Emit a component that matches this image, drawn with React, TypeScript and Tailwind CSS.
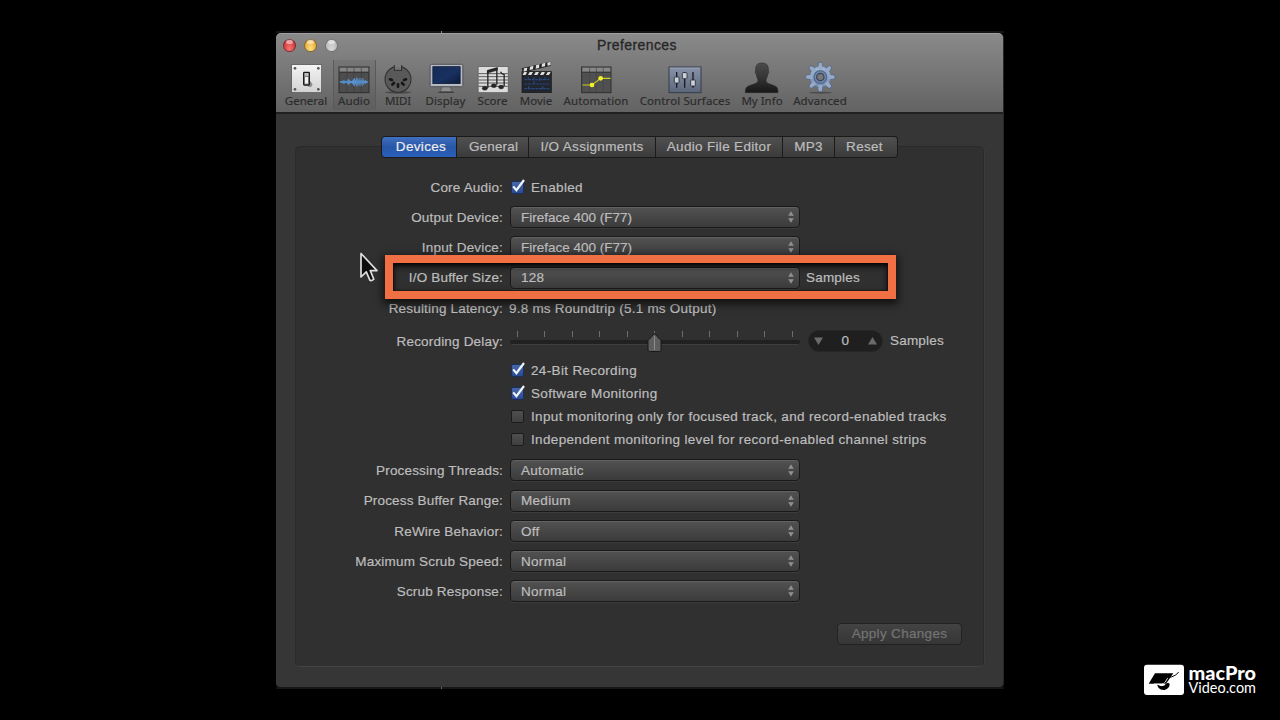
import type { ReactNode } from "react";

function GeneralIcon() {
  return (
    <svg width="36" height="35" viewBox="54 102 108 105">
      <defs>
        <linearGradient id="plate" x1="0" y1="0" x2="0" y2="1">
          <stop offset="0" stopColor="#f4f4f4" />
          <stop offset="1" stopColor="#d2d2d2" />
        </linearGradient>
      </defs>
      <rect x="65" y="116" width="90" height="84" fill="url(#plate)" stroke="#4c4c4c" strokeWidth="2" />
      <g fill="#555">
        <circle cx="75" cy="127" r="4" />
        <circle cx="145" cy="127" r="4" />
        <circle cx="75" cy="190" r="4" />
        <circle cx="145" cy="190" r="4" />
      </g>
      <path d="M104 178 l18 6 l6 -8 l-6 -10z" fill="#8e8e8e" />
      <rect x="101" y="139" width="17" height="38" rx="2" fill="#bdbdbd" stroke="#1c1c1c" strokeWidth="4" />
      <rect x="104" y="152" width="11" height="22" fill="#f2f2f2" stroke="#555" strokeWidth="2" />
    </svg>
  );
}

const waveBars = [3, 5, 8, 12, 6, 4, 11, 20, 13, 7, 5, 10, 18, 25, 14, 27, 22, 14, 24, 12, 24, 16, 8, 11, 5, 3];

function AudioIcon() {
  return (
    <svg width="36" height="35" viewBox="198 102 108 105">
      <rect x="207" y="123" width="90" height="77" fill="#4d4d4d" stroke="#2e2e2e" strokeWidth="3" />
      <rect x="209" y="125" width="86" height="12" fill="#858585" />
      <path d="M209 139h86" stroke="#333" strokeWidth="3" />
      <path d="M231 125v74M252 125v74M274 125v74" stroke="#3d3d3d" strokeWidth="2" />
      <path d="M209 168h86" stroke="#4d90db" strokeWidth="3" />
      {waveBars.map((h, i) => (
        <rect key={i} x={211 + i * 3.2} y={168 - h / 2} width="2.7" height={h} fill="#5b9be2" />
      ))}
    </svg>
  );
}

function MidiIcon() {
  return (
    <svg width="36" height="35" viewBox="330 102 108 105">
      <ellipse cx="384" cy="199" rx="40" ry="4" fill="#4a4a4a" />
      <circle cx="384" cy="160" r="38" fill="#595959" stroke="#2e2e2e" strokeWidth="5" />
      <circle cx="384" cy="160" r="36.5" fill="none" stroke="#7d7d7d" strokeWidth="1.5" />
      <rect x="373" y="119" width="22" height="14" fill="#737373" stroke="#2e2e2e" strokeWidth="3" />
      <rect x="375" y="115" width="18" height="8" fill="#7b7b7b" />
      <g stroke="#161616" strokeWidth="8" strokeLinecap="round">
        <path d="M360 160l6 2M367 176l5 -5M384 182v-7M401 176l-5 -5M408 160l-6 2" />
      </g>
    </svg>
  );
}

function DisplayIcon() {
  return (
    <svg width="36" height="35" viewBox="472.5 102 108 105">
      <defs>
        <linearGradient id="screen" x1="0" y1="0" x2="1" y2="1">
          <stop offset="0" stopColor="#142a55" />
          <stop offset=".55" stopColor="#193161" />
          <stop offset="1" stopColor="#0a1a3c" />
        </linearGradient>
      </defs>
      <path d="M515 182h24l6 15h-36z" fill="#8d8d8d" stroke="#4c4c4c" strokeWidth="2" />
      <path d="M504 199h46" stroke="#3f3f3f" strokeWidth="4" />
      <rect x="479" y="115" width="98" height="67" rx="3" fill="#b4b9c2" stroke="#43464c" strokeWidth="2.5" />
      <rect x="487" y="122" width="82" height="51" fill="url(#screen)" stroke="#0a1328" strokeWidth="2" />
    </svg>
  );
}

function ScoreIcon() {
  return (
    <svg width="36" height="35" viewBox="613.5 102 108 105">
      <rect x="623" y="122" width="90" height="78" fill="#dcdcdc" stroke="#575757" strokeWidth="2" />
      <path d="M624 143h88M624 152h88M624 162h88M624 171h88M624 181h88" stroke="#404040" strokeWidth="2.5" />
      <g fill="#252525" stroke="#252525">
        <path d="M652 186v-50l27 -8v48M679 133l0 -5" strokeWidth="4" fill="none" />
        <path d="M650 133l31 -9v9l-31 9z" />
        <ellipse cx="643" cy="187" rx="8" ry="6" />
        <ellipse cx="670" cy="179" rx="8" ry="6" />
        <path d="M701 180v-34q-8 -2 -11 -9" strokeWidth="4" fill="none" />
        <ellipse cx="692" cy="183" rx="8" ry="6" />
      </g>
    </svg>
  );
}

function MovieIcon() {
  return (
    <svg width="36" height="35" viewBox="24 102 108 105">
      <rect x="36" y="137" width="88" height="63" fill="#20252e" stroke="#191919" strokeWidth="2" />
      <path d="M35 127l84 -20 4 12 -84 21z" fill="#262626" />
      <path d="M42 127l10 -2 -2 10 -9 2zM60 122l10 -3 -1 11 -10 2zM78 118l10 -3 -1 11 -10 2zM96 113l10 -3 -1 11 -10 2zM112 110l8 -2 2 9 -9 2z" fill="#dedede" />
      <rect x="36" y="137" width="88" height="11" fill="#262626" />
      <path d="M42 138h9l-4 9h-9zM59 138h10l-5 9h-10zM77 138h10l-5 9h-10zM95 138h10l-5 9h-10zM113 138h9l-5 9h-9z" fill="#dedede" />
      <path d="M43 161h76M43 174h76M43 188h76M55 154v8M72 153v22M89 155v9M105 154v10M56 180v11M98 180v11" stroke="#294779" strokeWidth="3.5" strokeDasharray="9 2" />
    </svg>
  );
}

function AutomationIcon() {
  return (
    <svg width="36" height="35" viewBox="204 102 108 105">
      <rect x="215" y="123" width="88" height="77" fill="#505050" stroke="#2e2e2e" strokeWidth="3" />
      <rect x="217" y="125" width="84" height="12" fill="#878787" />
      <path d="M217 139h84" stroke="#373737" strokeWidth="3" />
      <path d="M239 125v74M259 125v74M280 125v74" stroke="#424242" strokeWidth="2" />
      <path d="M217 177h29l26 -20h30" fill="none" stroke="#c9cc21" strokeWidth="3.5" />
      <circle cx="246" cy="177" r="7" fill="#f2f128" />
      <circle cx="272" cy="157" r="7" fill="#f2f128" />
    </svg>
  );
}

function ControlSurfacesIcon() {
  return (
    <svg width="36" height="35" viewBox="471 102 108 105">
      <defs>
        <linearGradient id="mixer" x1="0" y1="0" x2="0" y2="1">
          <stop offset="0" stopColor="#8894ab" />
          <stop offset="1" stopColor="#5c667b" />
        </linearGradient>
      </defs>
      <rect x="477" y="123" width="96" height="77" fill="url(#mixer)" stroke="#343b49" strokeWidth="3" />
      <path d="M479 126h92" stroke="#a3adbd" strokeWidth="2" />
      <path d="M500 138v47M524 138v47M549 138v47" stroke="#181b22" strokeWidth="4" />
      <g fill="#ccd0d7" stroke="#282c36" strokeWidth="2.5">
        <rect x="493" y="153" width="14" height="18" rx="2" />
        <rect x="517" y="140" width="14" height="18" rx="2" />
        <rect x="542" y="162" width="14" height="18" rx="2" />
      </g>
    </svg>
  );
}

function MyInfoIcon() {
  return (
    <svg width="36" height="35" viewBox="42 102 108 105">
      <defs>
        <linearGradient id="person" x1="0" y1="0" x2="0" y2="1">
          <stop offset="0" stopColor="#4c4c4c" />
          <stop offset=".6" stopColor="#2f2f2f" />
          <stop offset="1" stopColor="#171717" />
        </linearGradient>
      </defs>
      <path
        d="M46 200c0 -13 2 -18 12 -21 12 -4 26 -7 26 -16 0 -5 -4 -8 -5 -17 -4 -5 -4 -10 -2 -13 -1 -14 4 -22 19 -22s20 8 19 22c2 3 2 8 -2 13 -1 9 -5 12 -5 17 0 9 13 12 25 16 9 3 11 8 11 21z"
        fill="url(#person)"
        stroke="#262626"
        strokeWidth="1.5"
      />
    </svg>
  );
}

function AdvancedIcon() {
  return (
    <svg width="36" height="35" viewBox="216 102 108 105">
      <defs>
        <linearGradient id="gear" x1="0" y1="0" x2="0" y2="1">
          <stop offset="0" stopColor="#a9bbd4" />
          <stop offset="1" stopColor="#7087ab" />
        </linearGradient>
      </defs>
      <ellipse cx="271" cy="200" rx="34" ry="3" fill="#4b4b4b" />
      <g fill="#8ea4c4" stroke="#4d5f7d" strokeWidth="2">
        {[0, 45, 90, 135, 180, 225, 270, 315].map((a) => (
          <path key={a} d="M262 128l4 -19h10l4 19z" transform={`rotate(${a} 271 153)`} />
        ))}
      </g>
      <circle cx="271" cy="153" r="32" fill="url(#gear)" stroke="#56698a" strokeWidth="1.5" />
      <g fill="#95aac8">
        {[0, 45, 90, 135, 180, 225, 270, 315].map((a) => (
          <path key={a} d="M264 129l4 -17h7l3 17z" transform={`rotate(${a} 271 153)`} />
        ))}
      </g>
      <circle cx="271" cy="153" r="19" fill="#7088ad" stroke="#536a90" strokeWidth="4" />
      <circle cx="271" cy="153" r="11" fill="#77787c" stroke="#3b4557" strokeWidth="4" />
    </svg>
  );
}

const tools: { label: string; icon: ReactNode; cell: string }[] = [
  { label: "General", icon: <GeneralIcon />, cell: "w-[54px] tracking-[0px]" },
  { label: "Audio", icon: <AudioIcon />, cell: "w-[42px] shadow-[inset_1px_0_0_#5a5a5a,1px_0_0_#5a5a5a] bg-black/5 tracking-[0.15px]" },
  { label: "MIDI", icon: <MidiIcon />, cell: "w-[46px] tracking-[-0.2px]" },
  { label: "Display", icon: <DisplayIcon />, cell: "w-[49px] tracking-[0.1px]" },
  { label: "Score", icon: <ScoreIcon />, cell: "w-[45px] tracking-[0px]" },
  { label: "Movie", icon: <MovieIcon />, cell: "w-[42px] tracking-[0px]" },
  { label: "Automation", icon: <AutomationIcon />, cell: "w-[78px] tracking-[0.1px]" },
  { label: "Control Surfaces", icon: <ControlSurfacesIcon />, cell: "w-[100px] tracking-[0.1px]" },
  { label: "My Info", icon: <MyInfoIcon />, cell: "w-[54px] tracking-[0px]" },
  { label: "Advanced", icon: <AdvancedIcon />, cell: "w-[62px] tracking-[0.1px]" },
];

function Light({ color }: { color: string }) {
  return (
    <span className={`relative block h-[13px] w-[13px] rounded-full border border-black/40 ${color}`}>
      <span className="absolute left-[2px] top-0 h-1 w-[7px] rounded-full bg-white/50 blur-[0.5px]" />
    </span>
  );
}

function Header() {
  return (
    <header className="flex h-[81px] flex-col rounded-t-[5px] border-b-2 border-[#202020] border-t border-t-[#a0a0a0] bg-gradient-to-b from-[#8a8a8a] to-[#636363]">
      <div className="grid h-[26px] grid-cols-[1fr_auto_1fr] items-start">
        <div className="flex gap-2 pl-[7px] pt-[5px]">
          <Light color="bg-radial-[at_50%_80%] from-[#f5766f] to-[#c92733]" />
          <Light color="bg-radial-[at_50%_80%] from-[#ffe07d] to-[#dd9a2b]" />
          <Light color="bg-radial-[at_50%_80%] from-[#d8d8d8] to-[#b3b3b3]" />
        </div>
        <h1 className="pr-[5px] pt-[3px] text-[14px] leading-4 tracking-[0.4px] text-[#262626] [-webkit-text-stroke:0.3px_#262626]">
          Preferences
        </h1>
      </div>
      <nav className="flex pl-[3px] font-['Noto_Sans',sans-serif] text-[11.5px] text-[#2c2c2c] [-webkit-text-stroke:0.2px_#2c2c2c]">
        {tools.map((t) => (
          <div key={t.label} className={`flex h-[50px] flex-col items-center ${t.cell}`}>
            <span className="block h-[35px] w-9 shrink-0">{t.icon}</span>
            <span className="-mt-[2px] whitespace-nowrap leading-4">{t.label}</span>
          </div>
        ))}
      </nav>
    </header>
  );
}

const tabs = [
  { label: "Devices", cell: "w-[76px] pl-[4px] rounded-l-[4px] bg-gradient-to-b from-[#4170c1] via-[#2756a7] to-[#2a5fbb] text-[#ededed]" },
  { label: "General", cell: "w-[72px] pl-[2px] tracking-[0.15px] bg-gradient-to-b from-[#505050] to-[#3b3b3b]" },
  { label: "I/O Assignments", cell: "w-[127px] bg-gradient-to-b from-[#505050] to-[#3b3b3b]" },
  { label: "Audio File Editor", cell: "w-[127px] bg-gradient-to-b from-[#505050] to-[#3b3b3b]" },
  { label: "MP3", cell: "w-[52px] bg-gradient-to-b from-[#505050] to-[#3b3b3b]" },
  { label: "Reset", cell: "w-[63px] pr-[3px] rounded-r-[4px] bg-gradient-to-b from-[#505050] to-[#3b3b3b]" },
];

function Tabs() {
  return (
    <div className="mx-auto flex h-[22px] w-[517px]">
      {tabs.map((t) => (
        <div
          key={t.label}
          className={`flex items-center justify-center whitespace-nowrap border-y border-r border-[#1a1a1a] first:border-l ${t.cell}`}
        >
          {t.label}
        </div>
      ))}
    </div>
  );
}

function Row({ label, height = "h-[30px]", children }: { label?: string; height?: string; children: ReactNode }) {
  return (
    <div className={`grid grid-cols-[207px_1fr] items-center gap-[7px] whitespace-nowrap ${height}`}>
      <div className="pt-px text-right tracking-[0.18px]">{label}</div>
      <div className="flex items-center">{children}</div>
    </div>
  );
}

function Select({ value, tight }: { value: string; tight?: boolean }) {
  return (
    <div className="flex h-[22px] w-[290px] items-center justify-between rounded-[4px] border border-[#191919] bg-gradient-to-b from-[#525252] to-[#3b3b3b] pl-[10px] pr-[5px] shadow-[inset_0_1px_0_#626262,0_1px_0_#3c3c3c]">
      <span className={`pt-px ${tight ? "tracking-[0px]" : "tracking-[0.3px]"}`}>{value}</span>
      <svg width="6" height="12" viewBox="0 0 6 12" fill="#919191">
        <path d="M3 0.3L5.8 4.8H0.2zM3 11.7L5.8 7.2H0.2z" />
      </svg>
    </div>
  );
}

function Check({ on, children }: { on?: boolean; children: ReactNode }) {
  return (
    <>
      <span
        className={`relative ml-px mr-[7px] block h-[13px] w-[13px] rounded-[2px] border ${
          on
            ? "border-[#1b2f5c] bg-gradient-to-b from-[#4769ab] to-[#2a4b91]"
            : "border-[#1c1c1c] bg-gradient-to-b from-[#4f4f4f] to-[#404040]"
        }`}
      >
        {on && (
          <svg className="absolute -top-[3px] left-0" width="14" height="14" viewBox="0 0 14 14">
            <path d="M1.2 7.4L4.4 11.2L12 1" fill="none" stroke="#f0f3f8" strokeWidth="2.2" />
          </svg>
        )}
      </span>
      <span className="pt-px tracking-[0.34px]">{children}</span>
    </>
  );
}

function DelaySlider() {
  return (
    <svg width="290" height="26" viewBox="0 0 290 26">
      <rect x="0" y="12" width="290" height="4" rx="2" fill="#212121" />
      <path d="M2 16.5h286" stroke="#3f3f3f" />
      {[7.5, 34.5, 62.5, 89.5, 117.5, 172.5, 199.5, 227.5, 254.5, 282.5].map((x) => (
        <path key={x} d={`M${x} 3v6`} stroke="#6d6d6d" />
      ))}
      <path d="M144.500 5.500L151 12.500V22q0 1.500 -1.500 1.500H139.500q-1.500 0 -1.500 -1.500V12.500z" fill="#5e5e5e" stroke="#191919" />
      <path d="M144.500 8v14" stroke="#8c8c8c" />
      <path d="M144.500 3v2" stroke="#6d6d6d" />
    </svg>
  );
}

function Callout() {
  return (
    <div className="absolute left-[109px] top-[222px] h-[44px] w-[511px] border-8 border-[#f17043] shadow-[0_3px_8px_2px_rgba(0,0,0,0.65),inset_0_3px_6px_1px_rgba(0,0,0,0.65)]">
      <div className="h-full w-full shadow-[inset_0_2px_3px_rgba(0,0,0,0.6),inset_0_0_0_1px_rgba(30,15,10,0.5)]" />
    </div>
  );
}

function Pointer() {
  return (
    <svg className="absolute left-[83px] top-[218px]" width="22" height="34" viewBox="0 0 22 34">
      <path
        d="M2 2.500V26L7.300 20.800L11 29.300Q12.500 30.300 14.800 28.200L11.300 19.600H18z"
        fill="#0c0c0c"
        stroke="#dedede"
        strokeWidth="1.7"
        strokeLinejoin="round"
      />
    </svg>
  );
}

function Brand() {
  return (
    <div className="absolute left-[1144px] top-[664px] flex gap-[4px] tracking-normal">
      <svg width="40" height="31" viewBox="42 42 120 93">
        <rect x="42" y="44" width="120" height="91" rx="9" fill="#fff" />
        <path d="M75 70h55L108 101H56z" fill="#000" />
        <path d="M82 103c0 10 8 17 18 17s19 -7 19 -18l-4 -4c-8 0 -9 9 -17 10 -6 1 -12 -1 -16 -5z" fill="#000" />
        <path d="M104 76q8 9 20 5 15 -4 22 -15" fill="none" stroke="#000" strokeWidth="3" />
        <path d="M72 102h22q8 0 12 -6l7 -12" fill="none" stroke="#fff" strokeWidth="2.500" />
      </svg>
      <svg width="72" height="44" viewBox="0 -6 72 44" fill="#fff" className="-mt-[6px] overflow-visible">
        <text x="0.500" y="16" fontFamily="Lato, sans-serif" fontSize="18.500" fontWeight="900" textLength="67.500" lengthAdjust="spacingAndGlyphs">
          macPro
        </text>
        <text x="0.500" y="28.700" fontFamily="Lato, sans-serif" fontSize="14.500" textLength="67.500" lengthAdjust="spacingAndGlyphs">
          Video.com
        </text>
      </svg>
    </div>
  );
}

export default function App() {
  return (
    <div className="relative h-[720px] w-[1280px] overflow-hidden bg-black pl-[276px] pt-[33px] font-['Liberation_Sans',Arial,sans-serif] text-[13.5px] leading-4 tracking-[0.32px] text-[#bdbdbd]">
      <div className="absolute left-[276px] top-[31px] h-[2px] w-[728px] bg-[#141414]" />
      <div className="absolute left-[441px] top-[31px] h-[2px] w-px bg-[#8a8a8a]" />
      <div className="absolute left-[276px] top-[687px] h-[2px] w-[728px] bg-[#151515]" />
      <div className="absolute left-[441px] top-[686px] h-[3px] w-px bg-[#6a6a6a]" />
      <div className="relative flex h-[654px] w-[728px] flex-col rounded-b-[4px] rounded-t-[5px] border-r border-[#262626] bg-[#363636]">
        <Header />
        <main className="mx-[19px] mt-[32px] flex h-[521px] flex-col rounded-[5px] border border-[#2a2a2a] border-b-[#444] bg-[#303030] pt-px shadow-[1px_0_0_#3b3b3b] [-webkit-text-stroke:0.2px_currentColor]">
          <div className="-mt-[12px]">
            <Tabs />
          </div>
          <div className="mt-[14px] flex flex-col">
            <Row label="Core Audio:">
              <Check on>Enabled</Check>
            </Row>
            <Row label="Output Device:">
              <Select value="Fireface 400 (F77)" tight />
            </Row>
            <Row label="Input Device:">
              <Select value="Fireface 400 (F77)" tight />
            </Row>
            <Row label="I/O Buffer Size:" height="h-[31px]">
              <Select value="128" />
              <span className="ml-[6px] tracking-[0.2px]">Samples</span>
            </Row>
            <Row label="Resulting Latency:">
              <span className="-ml-px pt-px tracking-[0.22px]">9.8 ms Roundtrip (5.1 ms Output)</span>
            </Row>
            <Row label="Recording Delay:" height="h-[36px]">
              <DelaySlider />
              <div className="ml-[8px] mr-[7px] flex h-[22px] w-[75px] items-center justify-between rounded-full border border-[#262626] bg-[#1f1f1f] px-[5px]">
                <svg width="9" height="8" viewBox="0 0 9 8" fill="#6b6b6b">
                  <path d="M0 0.500H9L4.500 8z" />
                </svg>
                <span>0</span>
                <svg width="9" height="8" viewBox="0 0 9 8" fill="#6b6b6b">
                  <path d="M0 7.500H9L4.500 0z" />
                </svg>
              </div>
              <span className="tracking-[0.2px]">Samples</span>
            </Row>
            <Row height="h-[23px]">
              <Check on>24-Bit Recording</Check>
            </Row>
            <Row height="h-[23px]">
              <Check on>Software Monitoring</Check>
            </Row>
            <Row height="h-[23px]">
              <Check>Input monitoring only for focused track, and record-enabled tracks</Check>
            </Row>
            <Row height="h-[23px]">
              <Check>Independent monitoring level for record-enabled channel strips</Check>
            </Row>
            <div className="mt-1">
              <Row label="Processing Threads:">
                <Select value="Automatic" />
              </Row>
              <Row label="Process Buffer Range:" height="h-[31px]">
                <Select value="Medium" />
              </Row>
              <Row label="ReWire Behavior:">
                <Select value="Off" />
              </Row>
              <Row label="Maximum Scrub Speed:">
                <Select value="Normal" />
              </Row>
              <Row label="Scrub Response:">
                <Select value="Normal" />
              </Row>
            </div>
          </div>
          <button className="mr-[21px] mt-[17px] flex h-[22px] w-[125px] items-center justify-center self-end rounded-[4px] border border-[#222] bg-gradient-to-b from-[#434343] to-[#363636] text-[#747474]">
            Apply Changes
          </button>
        </main>
        <Callout />
        <Pointer />
      </div>
      <Brand />
    </div>
  );
}
